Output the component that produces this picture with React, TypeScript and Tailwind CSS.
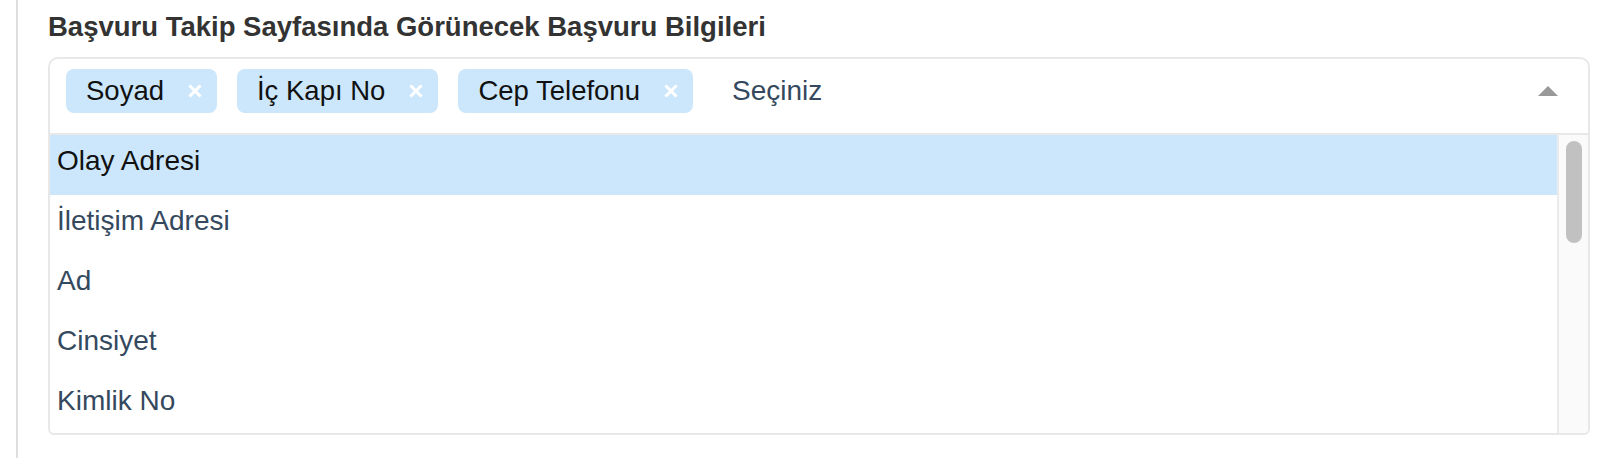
const selected = ["Soyad", "İç Kapı No", "Cep Telefonu"];
const options = ["Olay Adresi", "İletişim Adresi", "Ad", "Cinsiyet", "Kimlik No"];

function Tag({ label }: { label: string }) {
  return (
    <span className="flex h-[44px] items-center gap-[24px] rounded-[8px] bg-[#cce7fc] pl-[20px] pr-[15px] text-[27.5px] leading-none text-[#111]">
      <span>{label}</span>
      <svg viewBox="0 0 14 14" className="h-[14px] w-[14px]">
        <path d="M2.5 2.5 L11.5 11.5 M11.5 2.5 L2.5 11.5" stroke="#fff" strokeWidth="3" strokeLinecap="square" />
      </svg>
    </span>
  );
}

export default function App() {
  return (
    <div
      className="flex min-h-screen bg-white"
      style={{ fontFamily: '"Liberation Sans", Arial, sans-serif' }}
    >
      <div className="ml-4 w-[2px] self-stretch bg-[#dedede]" />
      <div className="w-[1542px] pl-[30px] pt-[11px]">
        <h2 className="text-[27.5px] font-bold leading-[32px] text-[#333]">
          Başvuru Takip Sayfasında Görünecek Başvuru Bilgileri
        </h2>

        <div className="mt-[14px] w-[1542px] overflow-hidden rounded-t-[10px] rounded-b-[6px] border-2 border-[#e8e8e8]">
          <div className="flex items-center border-b-2 border-[#e8e8e8] pb-[20px] pl-[16px] pr-[30px] pt-[10px]">
            <div className="flex items-center gap-[20px]">
              {selected.map((s) => (
                <Tag key={s} label={s} />
              ))}
            </div>
            <span className="ml-[39px] text-[28px] leading-none text-[#35495e]">Seçiniz</span>
            <svg viewBox="0 0 20 10" className="ml-auto h-[10px] w-[20px]">
              <path d="M0 10 L10 0 L20 10 Z" fill="#999" />
            </svg>
          </div>

          <div className="flex h-[298px] overflow-hidden">
            <ul className="flex-1">
              {options.map((o, i) => (
                <li
                  key={o}
                  className={`h-[60px] pb-[8px] pl-[7px] text-[28px] leading-[52px] ${
                    i === 0 ? "bg-[#cce7fc] text-[#111]" : "text-[#35495e]"
                  }`}
                >
                  {o}
                </li>
              ))}
            </ul>
            <div className="w-[31px] border-l-2 border-[#ebebeb] bg-[#fafafa] pl-[7px] pt-[6px]">
              <div className="h-[102px] w-[16px] rounded-full bg-[#c1c1c1]" />
            </div>
          </div>
        </div>
      </div>
    </div>
  );
}
